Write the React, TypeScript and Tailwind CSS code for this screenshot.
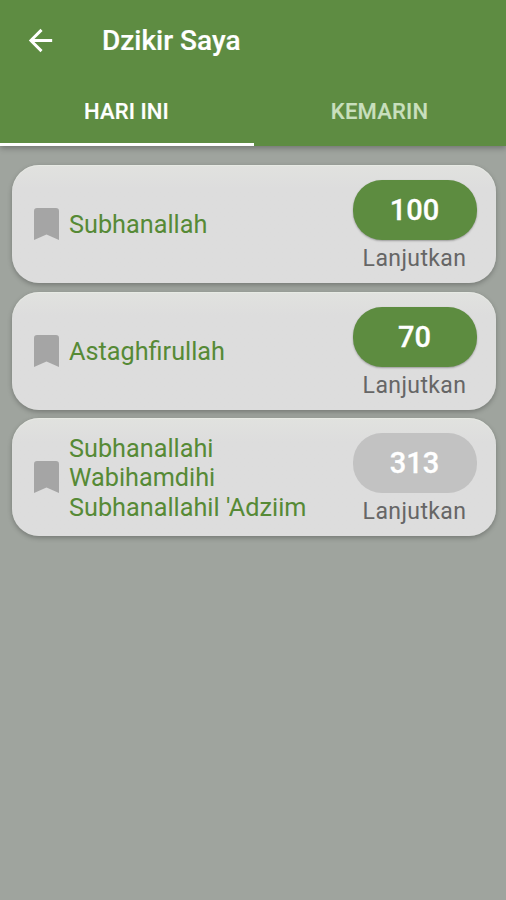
const items = [
  { lines: ['Subhanallah'], count: '100', active: true },
  { lines: ['Astaghfirullah'], count: '70', active: true },
  { lines: ['Subhanallahi', 'Wabihamdihi', "Subhanallahil 'Adziim"], count: '313', active: false },
];

export default function App() {
  return (
    <div className="flex h-[900px] w-[506px] flex-col overflow-hidden bg-[#9fa49e] font-[Roboto,sans-serif]">
      <header className="flex h-[146px] shrink-0 flex-col bg-[#5e8c42] text-white shadow-[0_2px_6px_rgba(0,0,0,0.3)]">
        <div className="flex h-[80px] items-center pl-[22.5px]">
          <svg width="35" height="35" viewBox="0 0 24 24" fill="currentColor" className="shrink-0">
            <path d="M20 11H7.83l5.59-5.59L12 4l-8 8 8 8 1.41-1.41L7.83 13H20z" />
          </svg>
          <h1 className="mt-[1px] ml-[44.5px] text-[28px] leading-none font-medium whitespace-nowrap [-webkit-text-stroke:0.2px_currentColor]">Dzikir Saya</h1>
        </div>
        <nav className="grid flex-1 grid-cols-2 text-center text-[22px] font-medium [-webkit-text-stroke:0.2px_currentColor]">
          <div className="mr-[-1px] border-b-[3px] border-white pt-[15px] pr-px tracking-[0.1px]">HARI INI</div>
          <div className="pt-[15px] tracking-[0.2px] text-[#c8dfbd]">KEMARIN</div>
        </nav>
      </header>
      <main className="flex flex-col gap-[8.5px] pt-[19px] pr-[10.5px] pl-[11.5px]">
        {items.map((it) => (
          <article key={it.count} className="flex h-[118px] items-center rounded-[27px] bg-linear-to-b from-[#e1e2df] to-[#dddddd] to-20% pr-[19px] pl-[22px] shadow-[0_2px_5px_rgba(0,0,0,0.26),inset_0_1px_1px_rgba(240,245,235,0.45)]">
            <svg width="25" height="32" viewBox="0 0 25 32" fill="#a5a5a5" className="shrink-0">
              <path d="M3 0H22Q25 0 25 3V32L12.5 26.5L0 32V3Q0 0 3 0Z" />
            </svg>
            <div className="ml-[10.5px] flex-1 pt-[1.5px] text-[25.25px] leading-[29.5px] text-[#568a36]">
              {it.lines.map((l) => <div key={l} className="whitespace-nowrap">{l}</div>)}
            </div>
            <div className="flex w-[124px] flex-col items-center pt-[5px]">
              <div className={`flex h-[60px] w-full items-center justify-center rounded-[29px] pt-[2px] text-[29px] font-medium text-white [-webkit-text-stroke:0.3px_currentColor] ${it.active ? 'bg-[#5d8c40] shadow-[0_1px_2px_rgba(0,0,0,0.3)]' : 'bg-[#c2c2c2]'}`}>{it.count}</div>
              <div className="mt-[5px] text-[23px] leading-[28px] tracking-[0.4px] text-[#666]">Lanjutkan</div>
            </div>
          </article>
        ))}
      </main>
    </div>
  );
}
